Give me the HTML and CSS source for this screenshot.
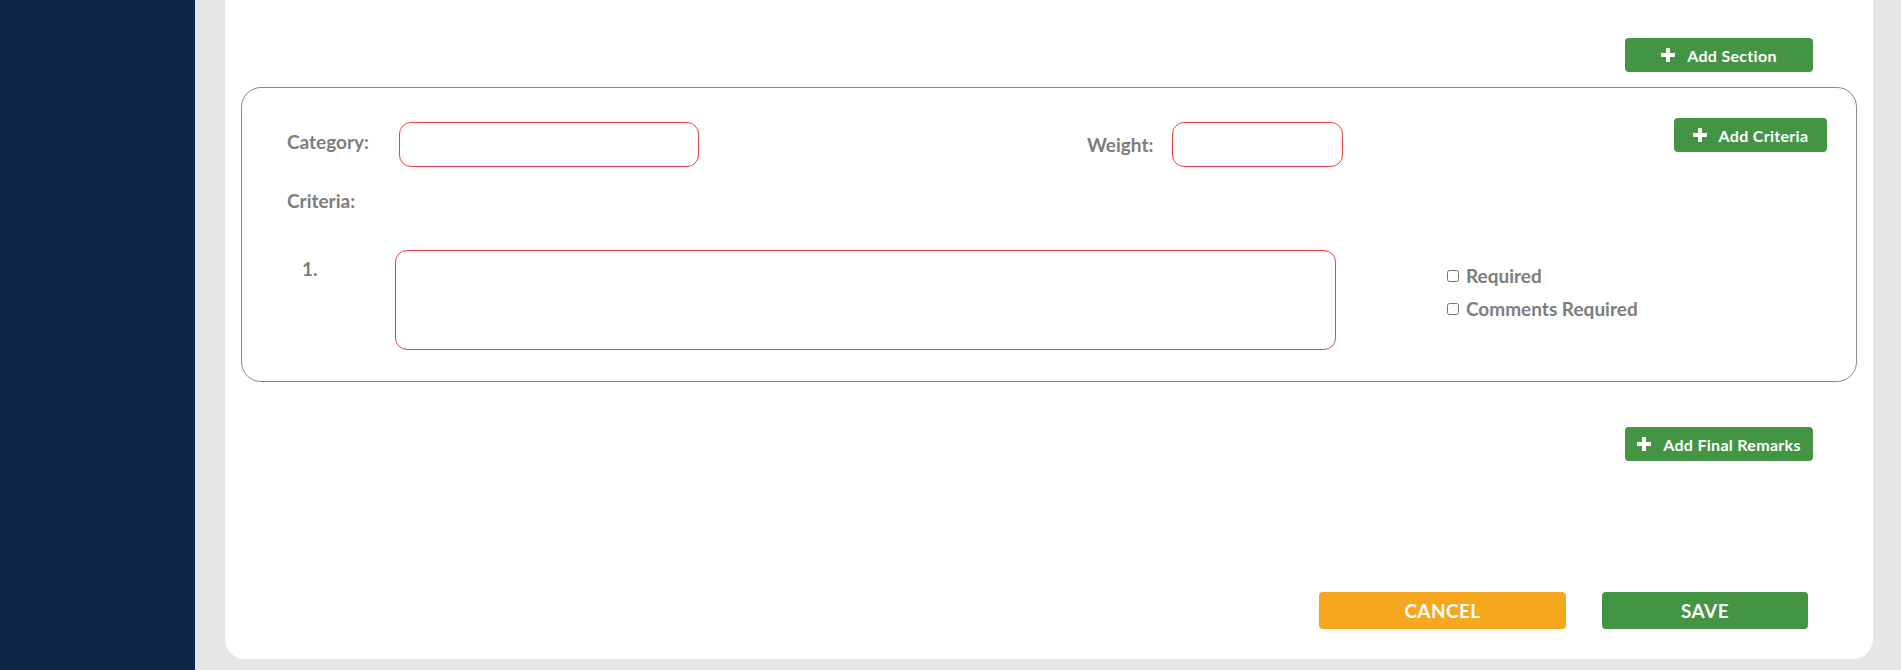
FILE: index.html
```html
<!DOCTYPE html>
<html lang="en">
<head>
    <meta charset="UTF-8">
    <title>Evaluation Template</title>
    <link rel="stylesheet" href="styles.css">
</head>
<body>
    <aside class="sidebar"></aside>

    <main class="main">
        <div class="panel">
            <div class="toolbar">
                <button class="btn-add">
                    <svg class="plus" viewBox="0 0 14 14"><path d="M5 0h4v5h5v4H9v5H5V9H0V5h5z"/></svg>
                    Add Section
                </button>
            </div>

            <section class="section-box">
                <div class="section-head">
                    <div class="field field-category">
                        <label>Category:</label>
                        <input type="text" class="input-red">
                    </div>
                    <div class="field field-weight">
                        <label>Weight:</label>
                        <input type="text" class="input-red">
                    </div>
                    <button class="btn-add btn-criteria">
                        <svg class="plus" viewBox="0 0 14 14"><path d="M5 0h4v5h5v4H9v5H5V9H0V5h5z"/></svg>
                        Add Criteria
                    </button>
                </div>

                <div class="criteria-label">Criteria:</div>

                <div class="criteria-item">
                    <div class="criteria-num">1.</div>
                    <textarea class="input-red criteria-text"></textarea>
                    <div class="criteria-options">
                        <label class="check"><input type="checkbox"> Required</label>
                        <label class="check"><input type="checkbox"> Comments Required</label>
                    </div>
                </div>
            </section>

            <div class="toolbar toolbar-remarks">
                <button class="btn-add">
                    <svg class="plus" viewBox="0 0 14 14"><path d="M5 0h4v5h5v4H9v5H5V9H0V5h5z"/></svg>
                    Add Final Remarks
                </button>
            </div>

            <div class="footer">
                <button class="btn-cancel">CANCEL</button>
                <button class="btn-save">SAVE</button>
            </div>
        </div>
    </main>
</body>
</html>
```

FILE: styles.css
```css
:root {
    --navy: #0b2646;
    --page-bg: #e6e6e6;
    --green: #439544;
    --orange: #f5a81e;
    --red: #e64646;
    --label: #7d7d7d;
    --box-border: #8a8a8a;
}

* {
    margin: 0;
    padding: 0;
    box-sizing: border-box;
}

body {
    font-family: Lato, "Liberation Sans", sans-serif;
    display: flex;
    height: 100vh;
    background: var(--page-bg);
    overflow: hidden;
}

.sidebar {
    width: 195px;
    flex-shrink: 0;
    background: var(--navy);
}

.main {
    flex: 1;
    padding: 0 28px 11px 30px;
}

.panel {
    background: white;
    height: 100%;
    border-radius: 0 0 20px 20px;
    padding-top: 38px;
    display: flex;
    flex-direction: column;
}

.toolbar {
    display: flex;
    justify-content: flex-end;
    padding-right: 60px;
}

.btn-add {
    display: flex;
    align-items: center;
    justify-content: center;
    gap: 12px;
    width: 188px;
    height: 34px;
    background: var(--green);
    color: white;
    border: none;
    border-radius: 4px;
    font-family: inherit;
    font-size: 16px;
    font-weight: 700;
    letter-spacing: 0.3px;
    cursor: pointer;
}

.plus {
    width: 14px;
    height: 14px;
    fill: white;
}

.section-box {
    margin: 15px 16px 0;
    border: 1px solid var(--box-border);
    border-radius: 20px;
    padding: 30px 29px 31px 45px;
}

.section-head {
    display: flex;
    align-items: flex-start;
}

.field {
    display: flex;
    align-items: center;
    margin-top: 4px;
}

.field label,
.criteria-label,
.criteria-num,
.check {
    font-size: 19px;
    line-height: 23px;
    font-weight: 700;
    color: var(--label);
}

.input-red {
    border: 1px solid var(--red);
    border-radius: 12px;
    height: 45px;
    font-family: inherit;
    font-size: 16px;
    padding: 0 12px;
    outline: none;
}

.field-category label {
    width: 112px;
    margin-bottom: 6px;
}

.field-category input {
    width: 300px;
}

.field-weight {
    margin-left: 388px;
}

.field-weight label {
    width: 85px;
}

.field-weight input {
    width: 171px;
}

.btn-criteria {
    margin-left: auto;
    width: 153px;
}

.criteria-label {
    margin-top: 22px;
}

.criteria-item {
    display: flex;
    align-items: flex-start;
    margin-top: 38px;
}

.criteria-num {
    width: 108px;
    padding: 7px 0 0 15px;
}

.criteria-text {
    width: 941px;
    height: 100px;
    resize: none;
    padding: 10px 12px;
}

.criteria-options {
    margin-left: 111px;
    padding-top: 14px;
    display: flex;
    flex-direction: column;
    gap: 10px;
}

.check {
    display: flex;
    align-items: center;
    gap: 7px;
}

.check input {
    width: 12px;
    height: 12px;
    margin: 0;
}

.toolbar-remarks {
    margin-top: 45px;
}

.footer {
    margin-top: auto;
    margin-bottom: 30px;
    display: flex;
    justify-content: flex-end;
    gap: 36px;
    padding-right: 65px;
}

.footer button {
    height: 37px;
    border: none;
    border-radius: 4px;
    color: white;
    font-family: inherit;
    font-size: 19px;
    font-weight: 700;
    letter-spacing: 0.4px;
    cursor: pointer;
}

.btn-cancel {
    width: 247px;
    background: var(--orange);
}

.btn-save {
    width: 206px;
    background: var(--green);
}
```
